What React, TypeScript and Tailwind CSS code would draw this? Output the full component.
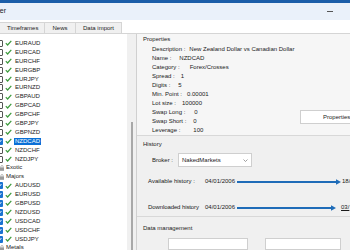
import type { ReactNode } from 'react'

type Row = { label: string; kind: 'pair' | 'folder'; checked?: boolean; selected?: boolean }

const rows: Row[] = [
    { label: 'EURAUD', kind: 'pair' },
    { label: 'EURCAD', kind: 'pair' },
    { label: 'EURCHF', kind: 'pair' },
    { label: 'EURGBP', kind: 'pair' },
    { label: 'EURJPY', kind: 'pair' },
    { label: 'EURNZD', kind: 'pair' },
    { label: 'GBPAUD', kind: 'pair' },
    { label: 'GBPCAD', kind: 'pair' },
    { label: 'GBPCHF', kind: 'pair' },
    { label: 'GBPJPY', kind: 'pair' },
    { label: 'GBPNZD', kind: 'pair' },
    { label: 'NZDCAD', kind: 'pair', checked: true, selected: true },
    { label: 'NZDCHF', kind: 'pair' },
    { label: 'NZDJPY', kind: 'pair' },
    { label: 'Exotic', kind: 'folder' },
    { label: 'Majors', kind: 'folder' },
    { label: 'AUDUSD', kind: 'pair', checked: true },
    { label: 'EURUSD', kind: 'pair', checked: true },
    { label: 'GBPUSD', kind: 'pair', checked: true },
    { label: 'NZDUSD', kind: 'pair', checked: true },
    { label: 'USDCAD', kind: 'pair', checked: true },
    { label: 'USDCHF', kind: 'pair', checked: true },
    { label: 'USDJPY', kind: 'pair', checked: true },
    { label: 'Metals', kind: 'folder' },
]

const props: [string, string, string][] = [
    ['Description :', 'New Zealand Dollar vs Canadian Dollar', 'ml-[4px]'],
    ['Name :', 'NZDCAD', 'ml-[8px]'],
    ['Category :', 'Forex/Crosses', 'ml-[10px]'],
    ['Spread :', '1', 'ml-[6px]'],
    ['Digits :', '5', 'ml-[8px]'],
    ['Min. Point :', '0.00001', 'ml-[5px]'],
    ['Lot size :', '100000', 'ml-[6px]'],
    ['Swap Long :', '0', 'ml-[9px]'],
    ['Swap Short :', '0', 'ml-[7px]'],
    ['Leverage :', '100', 'ml-[13px]'],
]

function Check() {
    return (
        <svg width="7" height="6" viewBox="0 0 7 6" className="shrink-0">
            <polyline points="0.8,3.2 2.6,5 6.3,0.8" fill="none" stroke="#3c9a3c" strokeWidth="1.2" />
        </svg>
    )
}

function Box({ checked }: { checked?: boolean }) {
    return checked ? (
        <div className="w-[7px] h-[7px] -ml-[4px] bg-[#1a73d1] rounded-[1px] flex items-center justify-center shrink-0">
            <svg width="5" height="5" viewBox="0 0 5 5">
                <polyline points="0.6,2.6 2,4 4.4,1" fill="none" stroke="#fff" strokeWidth="0.9" />
            </svg>
        </div>
    ) : (
        <div className="w-[7px] h-[7px] -ml-[4px] bg-white border border-[#555] rounded-[1px] shrink-0" />
    )
}

function Arrow({ width }: { width: number }) {
    return (
        <svg width={width} height="6" viewBox={`0 0 ${width} 6`} className="shrink-0">
            <line x1="0" y1="3" x2={width - 4} y2="3" stroke="#1f6cb8" strokeWidth="2" />
            <polygon points={`${width - 5},0.3 ${width},3 ${width - 5},5.7`} fill="#1f6cb8" />
        </svg>
    )
}

function Group({ title, children, className }: { title: string; children: ReactNode; className?: string }) {
    return (
        <div className={className}>
            <div className="pl-[6px] text-[#222] leading-[7px]">{title}</div>
            {children}
        </div>
    )
}

export default function App() {
    return (
        <div className="w-[350px] h-[250px] overflow-hidden bg-white text-[6px] text-[#1a1a1a] flex flex-col" style={{ fontFamily: '"Liberation Sans", Arial, sans-serif' }}>
            <div className="h-[3px] bg-[#1b5ea9] shrink-0" />
            <div className="h-[17px] bg-[#eaf1fa] flex items-center justify-between shrink-0">
                <span className="-ml-[13px] text-[7px]">Tester</span>
                <span className="mr-[17px] w-[6px] h-[1px] bg-[#555]" />
            </div>
            <div className="h-[2px] bg-white shrink-0" />
            <div className="h-[12px] flex items-end shrink-0 border-b border-[#d5d5d5]">
                <div className="h-[11px] w-[45px] bg-[#f0f0f0] border-r border-t border-[#d5d5d5] flex items-center pl-[7px]">Timeframes</div>
                <div className="h-[11px] w-[31px] bg-[#f0f0f0] border-r border-t border-[#d5d5d5] flex items-center justify-center">News</div>
                <div className="h-[11px] w-[46px] bg-[#f0f0f0] border-r border-t border-[#d5d5d5] flex items-center justify-center">Data import</div>
            </div>
            <div className="flex flex-1 min-h-0">
                <div className="w-[127px] bg-white pt-[5px] flex flex-col shrink-0">
                    {rows.map((r) => (
                        <div key={r.label} className="h-[8.9px] flex items-center shrink-0">
                            {r.kind === 'pair' ? (
                                <>
                                    <Box checked={r.checked} />
                                    <span className="ml-[2px]"><Check /></span>
                                    <span className={r.selected ? 'ml-[2px] px-[1px] bg-[#0a6fd6] text-white leading-[7px]' : 'ml-[3px]'}>{r.label}</span>
                                </>
                            ) : (
                                <>
                                    <svg width="5" height="6" viewBox="0 0 5 6" className="shrink-0">
                                        <rect x="0" y="2.4" width="4" height="3.4" fill="#9a9a9a" />
                                        <path d="M0.9 2.6 V1.6 A1.1 1.1 0 0 1 3.1 1.6 V2.6" fill="none" stroke="#9a9a9a" strokeWidth="0.7" />
                                    </svg>
                                    <span className="ml-[1px]">{r.label}</span>
                                </>
                            )}
                        </div>
                    ))}
                </div>
                <div className="w-[9px] bg-[#f0f0f0] flex flex-col items-center pt-[88px] shrink-0">
                    <div className="w-[2px] flex-1 bg-[#a8a8a8]" />
                </div>
                <div className="w-[1px] bg-[#d0d0d0] shrink-0" />
                <div className="flex-1 bg-[#f0f0f0] flex flex-col">
                    <Group title="Properties" className="bg-[#f6f6f6] pt-[2px] h-[103px] border-b border-[#d8d8d8] relative">
                        <div className="pl-[15px] pt-[2px] flex flex-col">
                            {props.map(([k, v, gap]) => (
                                <div key={k} className="h-[9px] flex items-center">
                                    <span>{k}</span>
                                    <span className={gap}>{v}</span>
                                </div>
                            ))}
                        </div>
                        <div className="absolute left-[163px] top-[76px] w-[60px] h-[14px] bg-white border border-[#cfcfcf] flex items-center pl-[22px]">Properties</div>
                    </Group>
                    <Group title="History" className="pt-[5px] h-[83px] border-b border-[#d8d8d8]">
                        <div className="flex items-center mt-[5px] pl-[15px]">
                            <span>Broker :</span>
                            <div className="ml-[5px] w-[74px] h-[14px] bg-white border border-[#cfcfcf] flex items-center justify-between px-[3px]">
                                <span>NakedMarkets</span>
                                <svg width="5" height="3" viewBox="0 0 5 3"><polyline points="0.5,0.5 2.5,2.5 4.5,0.5" fill="none" stroke="#777" strokeWidth="0.7" /></svg>
                            </div>
                        </div>
                        <div className="flex items-center mt-[10px] pl-[11px]">
                            <span className="w-[57px] shrink-0">Available history :</span>
                            <span>04/01/2006</span>
                            <span className="ml-[2px]"><Arrow width={104} /></span>
                            <span className="ml-[1px]">18/</span>
                        </div>
                        <div className="flex items-center mt-[17px] pl-[11px]">
                            <span className="w-[57px] shrink-0 tracking-[-0.1px]">Downloaded history</span>
                            <span>04/01/2006</span>
                            <span className="ml-[2px]"><Arrow width={99} /></span>
                            <span className="ml-[5px] underline">03/</span>
                        </div>
                    </Group>
                    <Group title="Data management" className="pt-[8px] flex-1">
                        <div className="flex mt-[6px] pl-[31px] gap-[17px]">
                            <div className="w-[80px] h-[12px] bg-white border border-[#cfcfcf]" />
                            <div className="w-[76px] h-[12px] bg-white border border-[#cfcfcf]" />
                        </div>
                    </Group>
                </div>
            </div>
        </div>
    )
}
